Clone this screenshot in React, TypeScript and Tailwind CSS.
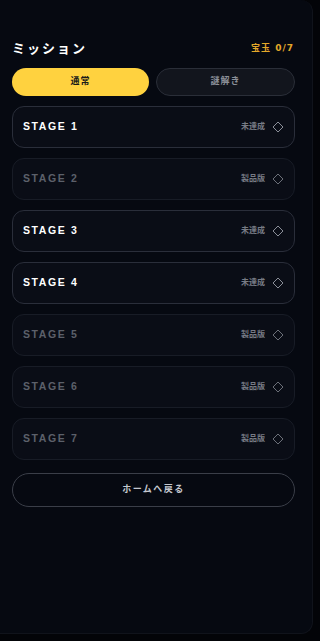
import React from 'react';

type Stage = { n: number; status: string; locked: boolean };

const stages: Stage[] = [
  { n: 1, status: '未達成', locked: false },
  { n: 2, status: '製品版', locked: true },
  { n: 3, status: '未達成', locked: false },
  { n: 4, status: '未達成', locked: false },
  { n: 5, status: '製品版', locked: true },
  { n: 6, status: '製品版', locked: true },
  { n: 7, status: '製品版', locked: true },
];

const font = { fontFamily: '"DejaVu Sans", "Noto Sans CJK JP", sans-serif' };

function Diamond({ dim }: { dim: boolean }) {
  return (
    <svg width="12" height="12" viewBox="0 0 12 12" className={dim ? 'text-[#6b6f78]' : 'text-[#8a8e98]'}>
      <path d="M6 1 L11 6 L6 11 L1 6 Z" fill="none" stroke="currentColor" strokeWidth="1" />
    </svg>
  );
}

function StageRow({ s }: { s: Stage }) {
  return (
    <div
      className={`flex items-center justify-between h-[42px] rounded-[12px] border px-[10px] bg-[#0a0d16] ${
        s.locked ? 'border-[#181c26]' : 'border-[#2a2e3a]'
      }`}
    >
      <span
        className={`font-['Liberation_Sans',sans-serif] text-[10.5px] font-bold tracking-[1.6px] ${
          s.locked ? 'text-[#5c606a]' : 'text-white'
        }`}
      >
        STAGE {s.n}
      </span>
      <div className="flex items-center gap-[7px]">
        <span className="text-[8px] font-bold text-[#777b85]">{s.status}</span>
        <Diamond dim={s.locked} />
      </div>
    </div>
  );
}

export default function App() {
  return (
    <div className="w-[320px] h-[641px] bg-[#030408]" style={font}>
      <div className="w-[313px] h-[634px] rounded-tr-[12px] rounded-br-[12px] bg-[#060911] border-r border-b border-[#10131b] px-[12px] pt-[39px]">
        <div className="flex items-center justify-between pr-[6px]">
          <h1 className="text-[13px] font-bold tracking-[2px] text-white">ミッション</h1>
          <span className="text-[9px] font-bold tracking-[1px] text-[#e3a829]">宝玉 0/7</span>
        </div>

        <div className="flex gap-[7px] mt-[9px] w-[283px]">
          <button className="flex-1 h-[28px] rounded-full bg-[#ffd23f] text-[9px] font-bold text-[#1a1a1a] tracking-[1px]">
            通常
          </button>
          <button className="flex-1 h-[28px] rounded-full bg-[#12151d] border border-[#2a2e38] text-[9px] font-bold text-[#8c9099] tracking-[1px]">
            謎解き
          </button>
        </div>

        <div className="flex flex-col gap-[10px] mt-[10px] w-[283px]">
          {stages.map((s) => (
            <StageRow key={s.n} s={s} />
          ))}
        </div>

        <button className="mt-[13px] w-[283px] h-[34px] rounded-full border border-[#3a3e48] bg-transparent text-[9px] font-bold tracking-[1.5px] text-[#c4c7ce]">
          ホームへ戻る
        </button>
      </div>
    </div>
  );
}
